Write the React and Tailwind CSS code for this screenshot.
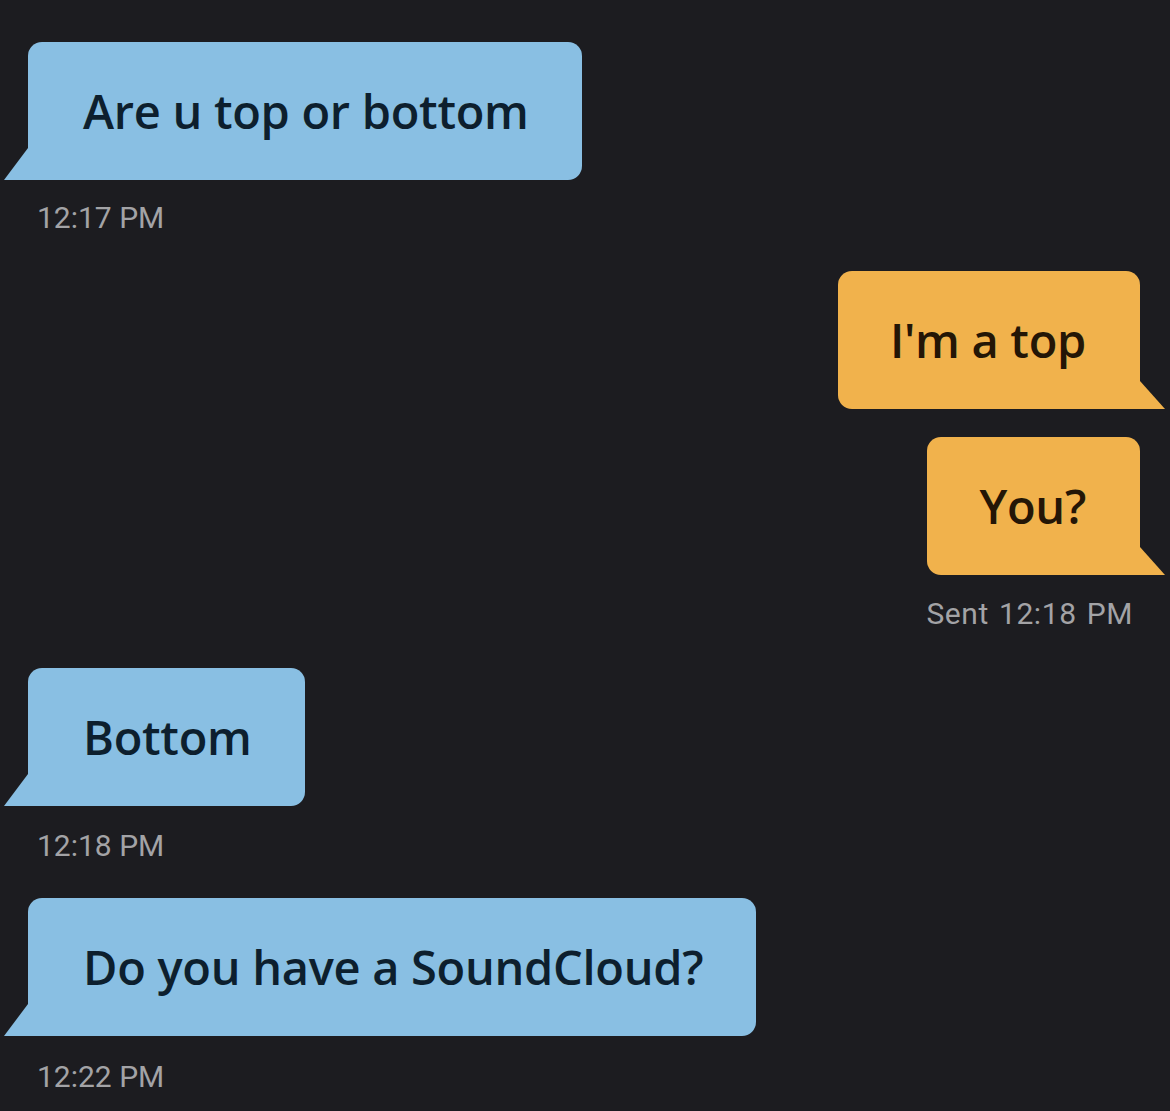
import React from "react";

function Received({ text, className = "" }) {
  return (
    <div className={"relative self-start ml-[28px] " + className}>
      <div className="h-[138px] flex items-center pl-[55px] pr-[53px] bg-[#89bfe3] rounded-[14px] rounded-bl-none text-[#0d1f2e] text-[47px] leading-none font-semibold tracking-[-0.3px] font-['Open_Sans',sans-serif]">
        {text}
      </div>
      <svg className="absolute left-[-24px] bottom-0" width="25" height="32" viewBox="0 0 25 32">
        <polygon points="24,0 25,0 25,32 0,32" fill="#89bfe3" />
      </svg>
    </div>
  );
}

function Sent({ text, className = "" }) {
  return (
    <div className={"relative self-end mr-[30px] " + className}>
      <div className="h-[138px] flex items-center pl-[52px] pr-[54px] bg-[#f1b24c] rounded-[14px] rounded-br-none text-[#241606] text-[47px] leading-none font-semibold tracking-[-0.3px] font-['Open_Sans',sans-serif]">
        {text}
      </div>
      <svg className="absolute right-[-25px] bottom-0" width="26" height="28" viewBox="0 0 26 28">
        <polygon points="0,0 1,0 26,28 0,28" fill="#f1b24c" />
      </svg>
    </div>
  );
}

function Stamp({ children, className = "" }) {
  return (
    <div className={"text-[30px] leading-[30px] text-[#a3a3a6] font-['Roboto',sans-serif] " + className}>{children}</div>
  );
}

export default function App() {
  return (
    <div className="w-[1170px] h-[1111px] bg-[#1c1c20] flex flex-col overflow-hidden">
      <Received text="Are u top or bottom" className="mt-[42px]" />
      <Stamp className="ml-[37px] mt-[23px]">12:17 PM</Stamp>
      <Sent text="I'm a top" className="mt-[38px]" />
      <Sent text="You?" className="mt-[28px]" />
      <Stamp className="self-end mr-[37px] mt-[24px] tracking-[0.6px] [word-spacing:2px]">Sent 12:18 PM</Stamp>
      <Received text="Bottom" className="mt-[39px]" />
      <Stamp className="ml-[37px] mt-[25px]">12:18 PM</Stamp>
      <Received text="Do you have a SoundCloud?" className="mt-[37px]" />
      <Stamp className="ml-[37px] mt-[26px]">12:22 PM</Stamp>
    </div>
  );
}
